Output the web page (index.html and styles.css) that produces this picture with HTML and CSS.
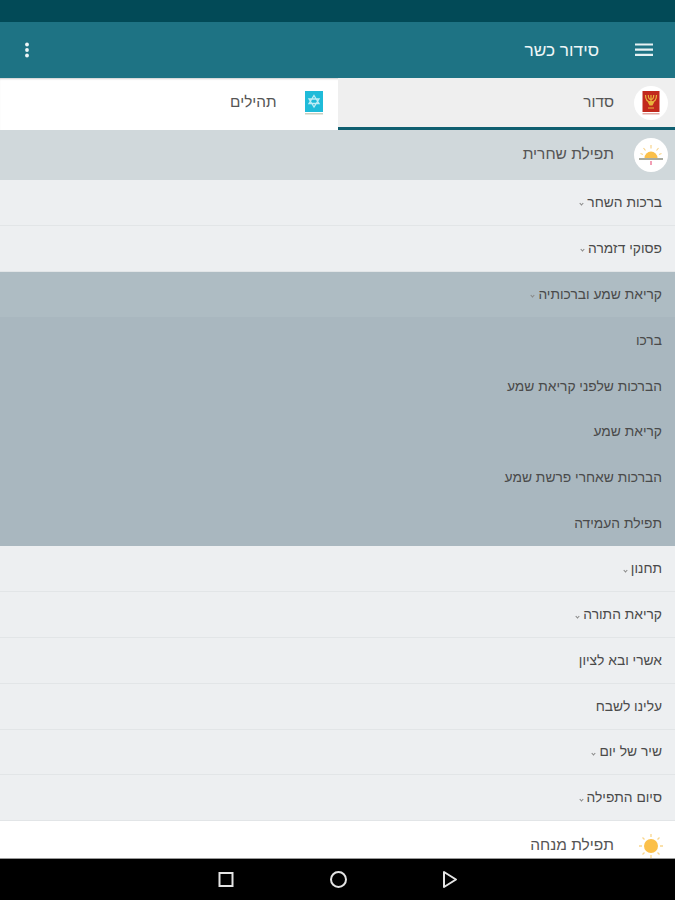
FILE: index.html
```html
<!DOCTYPE html>
<html lang="he" dir="rtl">
<head>
    <meta charset="UTF-8">
    <meta name="viewport" content="width=device-width, initial-scale=1.0">
    <title>סידור כשר</title>
    <link rel="stylesheet" href="styles.css">
</head>
<body>
    <div class="status-bar"></div>

    <header class="toolbar">
        <svg class="menu-icon" width="18" height="14" viewBox="0 0 18 14">
            <path d="M0 1.500h18M0 6.700h18M0 11.900h18" stroke="#e6f2f4" stroke-width="2.200"/>
        </svg>
        <h1 class="title">סידור כשר</h1>
        <svg class="more-icon" width="6" height="16" viewBox="0 0 6 16">
            <circle cx="3" cy="2.500" r="1.900" fill="#eef6f7"/>
            <circle cx="3" cy="8" r="1.900" fill="#eef6f7"/>
            <circle cx="3" cy="13.500" r="1.900" fill="#eef6f7"/>
        </svg>
    </header>

    <nav class="tabs">
        <div class="tab tab-active">
            <span class="icon-circle">
                <svg width="20" height="26" viewBox="0 0 20 26">
                    <rect x="1.500" y="1" width="17" height="21" fill="#c2281c"/>
                    <path d="M4.500 5c0 5 2.500 7 5.500 7s5.500-2 5.500-7M7.300 5c0 3 1 4.500 2.700 4.500s2.700-1.500 2.700-4.500M10 5v10" fill="none" stroke="#e9b33c" stroke-width="1.200"/>
                    <path d="M6.500 11.500h7l-2 4h-3zM7 17.500h6v1h-6z" fill="#e9b33c"/>
                    <rect x="1.500" y="23" width="17" height="1.500" fill="#e2a9a3"/>
                </svg>
            </span>
            <span class="tab-label">סדור</span>
        </div>
        <div class="tab">
            <span class="icon-circle">
                <svg width="20" height="26" viewBox="0 0 20 26">
                    <rect x="1" y="1" width="18" height="21" fill="#1fbbd9"/>
                    <path d="M10 5.500l5 8h-10zM10 17l-5-8h10z" fill="none" stroke="#bdecf5" stroke-width="1.300"/>
                    <rect x="1" y="23" width="18" height="1.500" fill="#c9cfc0"/>
                </svg>
            </span>
            <span class="tab-label">תהילים</span>
        </div>
    </nav>

    <main class="list">
        <div class="section section-open">
            <span class="icon-circle">
                <svg width="26" height="24" viewBox="0 0 26 24">
                    <path d="M6.500 15a6.500 6.500 0 0 1 13 0z" fill="#fbc04a"/>
                    <path d="M13 2v3.500M5.500 5l2 2.500M20.500 5l-2 2.500M2.500 10.500l2.500 1M23.500 10.500l-2.500 1" stroke="#f8d48c" stroke-width="1.200"/>
                    <path d="M1 16h24" stroke="#8b8f80" stroke-width="1.500"/>
                    <path d="M13 18v4" stroke="#ee7f9c" stroke-width="1.500"/>
                </svg>
            </span>
            <span class="section-label">תפילת שחרית</span>
        </div>

        <div class="row">ברכות השחר <i class="caret"></i></div>
        <div class="row">פסוקי דזמרה <i class="caret"></i></div>
        <div class="row row-expanded">קריאת שמע וברכותיה <i class="caret"></i></div>
        <div class="sub-list">
            <div class="sub-row">ברכו</div>
            <div class="sub-row">הברכות שלפני קריאת שמע</div>
            <div class="sub-row">קריאת שמע</div>
            <div class="sub-row">הברכות שאחרי פרשת שמע</div>
            <div class="sub-row">תפילת העמידה</div>
        </div>
        <div class="row">תחנון <i class="caret"></i></div>
        <div class="row">קריאת התורה <i class="caret"></i></div>
        <div class="row">אשרי ובא לציון</div>
        <div class="row">עלינו לשבח</div>
        <div class="row">שיר של יום <i class="caret"></i></div>
        <div class="row">סיום התפילה <i class="caret"></i></div>

        <div class="section section-closed">
            <span class="icon-circle">
                <svg width="26" height="26" viewBox="0 0 26 26">
                    <circle cx="13" cy="13" r="7" fill="#fbc04a"/>
                    <path d="M13 1v3M13 22v3M1 13h3M22 13h3M4.500 4.500l2 2M19.500 19.500l2 2M21.500 4.500l-2 2M6.500 19.500l-2 2" stroke="#f9d68e" stroke-width="1.300"/>
                </svg>
            </span>
            <span class="section-label">תפילת מנחה</span>
        </div>
    </main>

    <footer class="nav-bar">
        <svg width="270" height="20" viewBox="0 0 270 20">
            <rect x="16.500" y="3" width="13" height="13" fill="none" stroke="#e4e4e4" stroke-width="2"/>
            <circle cx="135.500" cy="9.500" r="7.500" fill="none" stroke="#e4e4e4" stroke-width="2"/>
            <path d="M241 2v15l12-7.500z" fill="none" stroke="#e4e4e4" stroke-width="2" stroke-linejoin="round"/>
        </svg>
    </footer>
</body>
</html>
```

FILE: styles.css
```css
body {
    font-family: "Liberation Sans", "DejaVu Sans", sans-serif;
    display: flex;
    flex-direction: column;
    height: 900px;
    margin: 0;
    overflow: hidden;
    background-color: #edeff1;
    color: #444;
}
.status-bar {
    flex: none;
    height: 22px;
    background-color: #024a57;
}
.toolbar {
    display: flex;
    flex: none;
    align-items: center;
    height: 56px;
    padding: 0 22px 0 24px;
    background-color: #1e7384;
    color: #eef6f7;
}
.menu-icon {
    margin-left: 36px;
}
.title {
    flex: 1;
    margin: 0;
    padding-top: 1px;
    font-size: 17.300px;
    font-weight: normal;
}
.tabs {
    display: flex;
    flex: none;
    height: 52px;
    background-color: #fff;
    box-shadow: inset 0 2px 2px -1px rgba(0, 0, 0, 0.2);
}
.tab {
    display: flex;
    flex: 1;
    align-items: center;
    padding: 0 7px;
    box-sizing: border-box;
    border-bottom: 3px solid transparent;
    font-size: 15.300px;
    color: #555;
}
.tab-active {
    border-bottom-color: #0f5f70;
    background-color: #efefef;
}
.tab-label,
.section-label {
    margin-bottom: 2px;
}
.icon-circle {
    display: flex;
    flex: none;
    align-items: center;
    justify-content: center;
    width: 34px;
    height: 34px;
    margin-left: 20px;
    border-radius: 50%;
}
.tab-active .icon-circle,
.section-open .icon-circle {
    background-color: #fff;
}
.list {
    flex: 1;
    overflow: hidden;
}
.section {
    display: flex;
    align-items: center;
    height: 50px;
    padding: 0 7px;
    font-size: 15.500px;
    color: #555;
}
.section-open {
    background-color: #d0d8db;
}
.section-closed {
    background-color: #fff;
}
.row,
.sub-row {
    display: flex;
    align-items: center;
    gap: 4px;
    height: 45.800px;
    padding: 0 13px;
    box-sizing: border-box;
    font-size: 13.800px;
    color: #4a4a4a;
}
.row {
    border-bottom: 1px solid #e2e5e7;
}
.row-expanded {
    border-bottom: none;
    background-color: #aebcc3;
}
.sub-list {
    background-color: #a9b7bf;
}
.caret {
    width: 2px;
    height: 2px;
    margin-top: 3px;
    border-bottom: 1px solid #888;
    border-left: 1px solid #888;
    transform: rotate(-45deg);
}
.nav-bar {
    display: flex;
    flex: none;
    align-items: center;
    justify-content: center;
    height: 41px;
    border-top: 1px solid #999;
    background-color: #000;
}
```
